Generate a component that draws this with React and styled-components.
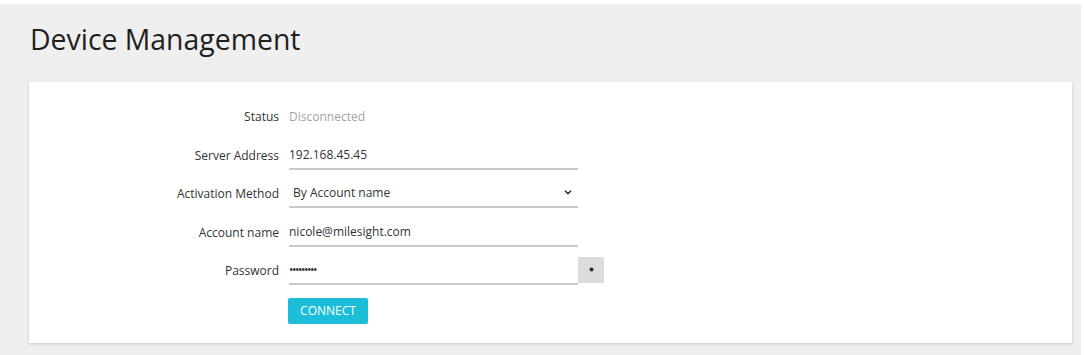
import React, { useState } from 'react'
import styled, { createGlobalStyle } from 'styled-components'

const GlobalStyle = createGlobalStyle`
  html, body {
    margin: 0;
    padding: 0;
    background: #ffffff;
  }
  body {
    font-family: "Open Sans", "Noto Sans", Arial, sans-serif;
  }
`

const Page = styled.div`
  margin: 4px 3px 0 0;
  height: 351px;
  background: #efefef;
  box-sizing: border-box;
  padding-top: 17px;
`

const Title = styled.h1`
  margin: 0 0 25px 30px;
  font-size: 28.4px;
  line-height: 36px;
  font-weight: 400;
  color: #1f1f1f;
`

const Card = styled.section`
  margin: 0 9px 0 29px;
  height: 261px;
  box-sizing: border-box;
  padding-top: 20px;
  background: #ffffff;
  box-shadow: 0 1px 3px rgba(0, 0, 0, 0.16);
`

const Form = styled.div`
  display: grid;
  grid-template-columns: 250px auto;
  grid-auto-rows: 29px;
  column-gap: 10px;
  row-gap: 9.5px;
  align-items: center;
  justify-content: start;
`

const Label = styled.label`
  justify-self: end;
  font-size: 12px;
  color: #333333;
  white-space: nowrap;
`

const Value = styled.span`
  font-size: 12px;
  color: ${p => (p.$muted ? '#a3a3a3' : '#333333')};
`

const Field = styled.div`
  display: flex;
  align-items: center;
  height: 29px;
`

const Input = styled.input`
  width: 289px;
  height: 29px;
  box-sizing: border-box;
  border: none;
  border-bottom: 2px solid #c9c9c9;
  padding: 0;
  outline: none;
  background: transparent;
  font-family: inherit;
  font-size: 12px;
  color: #333333;
  letter-spacing: ${p => (p.type === 'password' ? '-1.5px' : '0')};
`

const SelectBox = styled.div`
  width: 289px;
  height: 29px;
  box-sizing: border-box;
  border-bottom: 2px solid #c9c9c9;
  display: flex;
  align-items: center;
  justify-content: space-between;
  padding: 0 6px 0 4px;
  font-size: 12px;
  color: #333333;
`

const Toggle = styled.button`
  width: 26px;
  height: 26px;
  margin-top: -2px;
  border: none;
  padding: 0;
  background: #dcdcdc;
  display: flex;
  align-items: center;
  justify-content: center;
  cursor: pointer;
`

const ConnectButton = styled.button`
  grid-column: 2;
  align-self: end;
  margin-left: -1px;
  width: 80px;
  height: 26px;
  border: none;
  border-radius: 2px;
  background: #1cbdd9;
  color: #ffffff;
  font-family: inherit;
  font-size: 12px;
  text-transform: uppercase;
  cursor: pointer;
`

const Chevron = () => (
  <svg width="8" height="5" viewBox="0 0 8 5">
    <path d="M1 0.8l3 3 3-3" fill="none" stroke="#222" strokeWidth="1.5" />
  </svg>
)

const Dot = () => (
  <svg width="5" height="5" viewBox="0 0 5 5">
    <circle cx="2.5" cy="2.5" r="2" fill="#2a2a2a" />
  </svg>
)

const App = () => {
  const [password] = useState('123456789')
  return (
    <>
      <GlobalStyle />
      <Page>
        <Title>Device Management</Title>
        <Card>
          <Form>
            <Label>Status</Label>
            <Value $muted>Disconnected</Value>

            <Label>Server Address</Label>
            <Field>
              <Input defaultValue="192.168.45.45" />
            </Field>

            <Label>Activation Method</Label>
            <Field>
              <SelectBox>
                <span>By Account name</span>
                <Chevron />
              </SelectBox>
            </Field>

            <Label>Account name</Label>
            <Field>
              <Input defaultValue="nicole@milesight.com" />
            </Field>

            <Label>Password</Label>
            <Field>
              <Input type="password" defaultValue={password} />
              <Toggle type="button" aria-label="Show password">
                <Dot />
              </Toggle>
            </Field>

            <ConnectButton type="button">Connect</ConnectButton>
          </Form>
        </Card>
      </Page>
    </>
  )
}

export default App
